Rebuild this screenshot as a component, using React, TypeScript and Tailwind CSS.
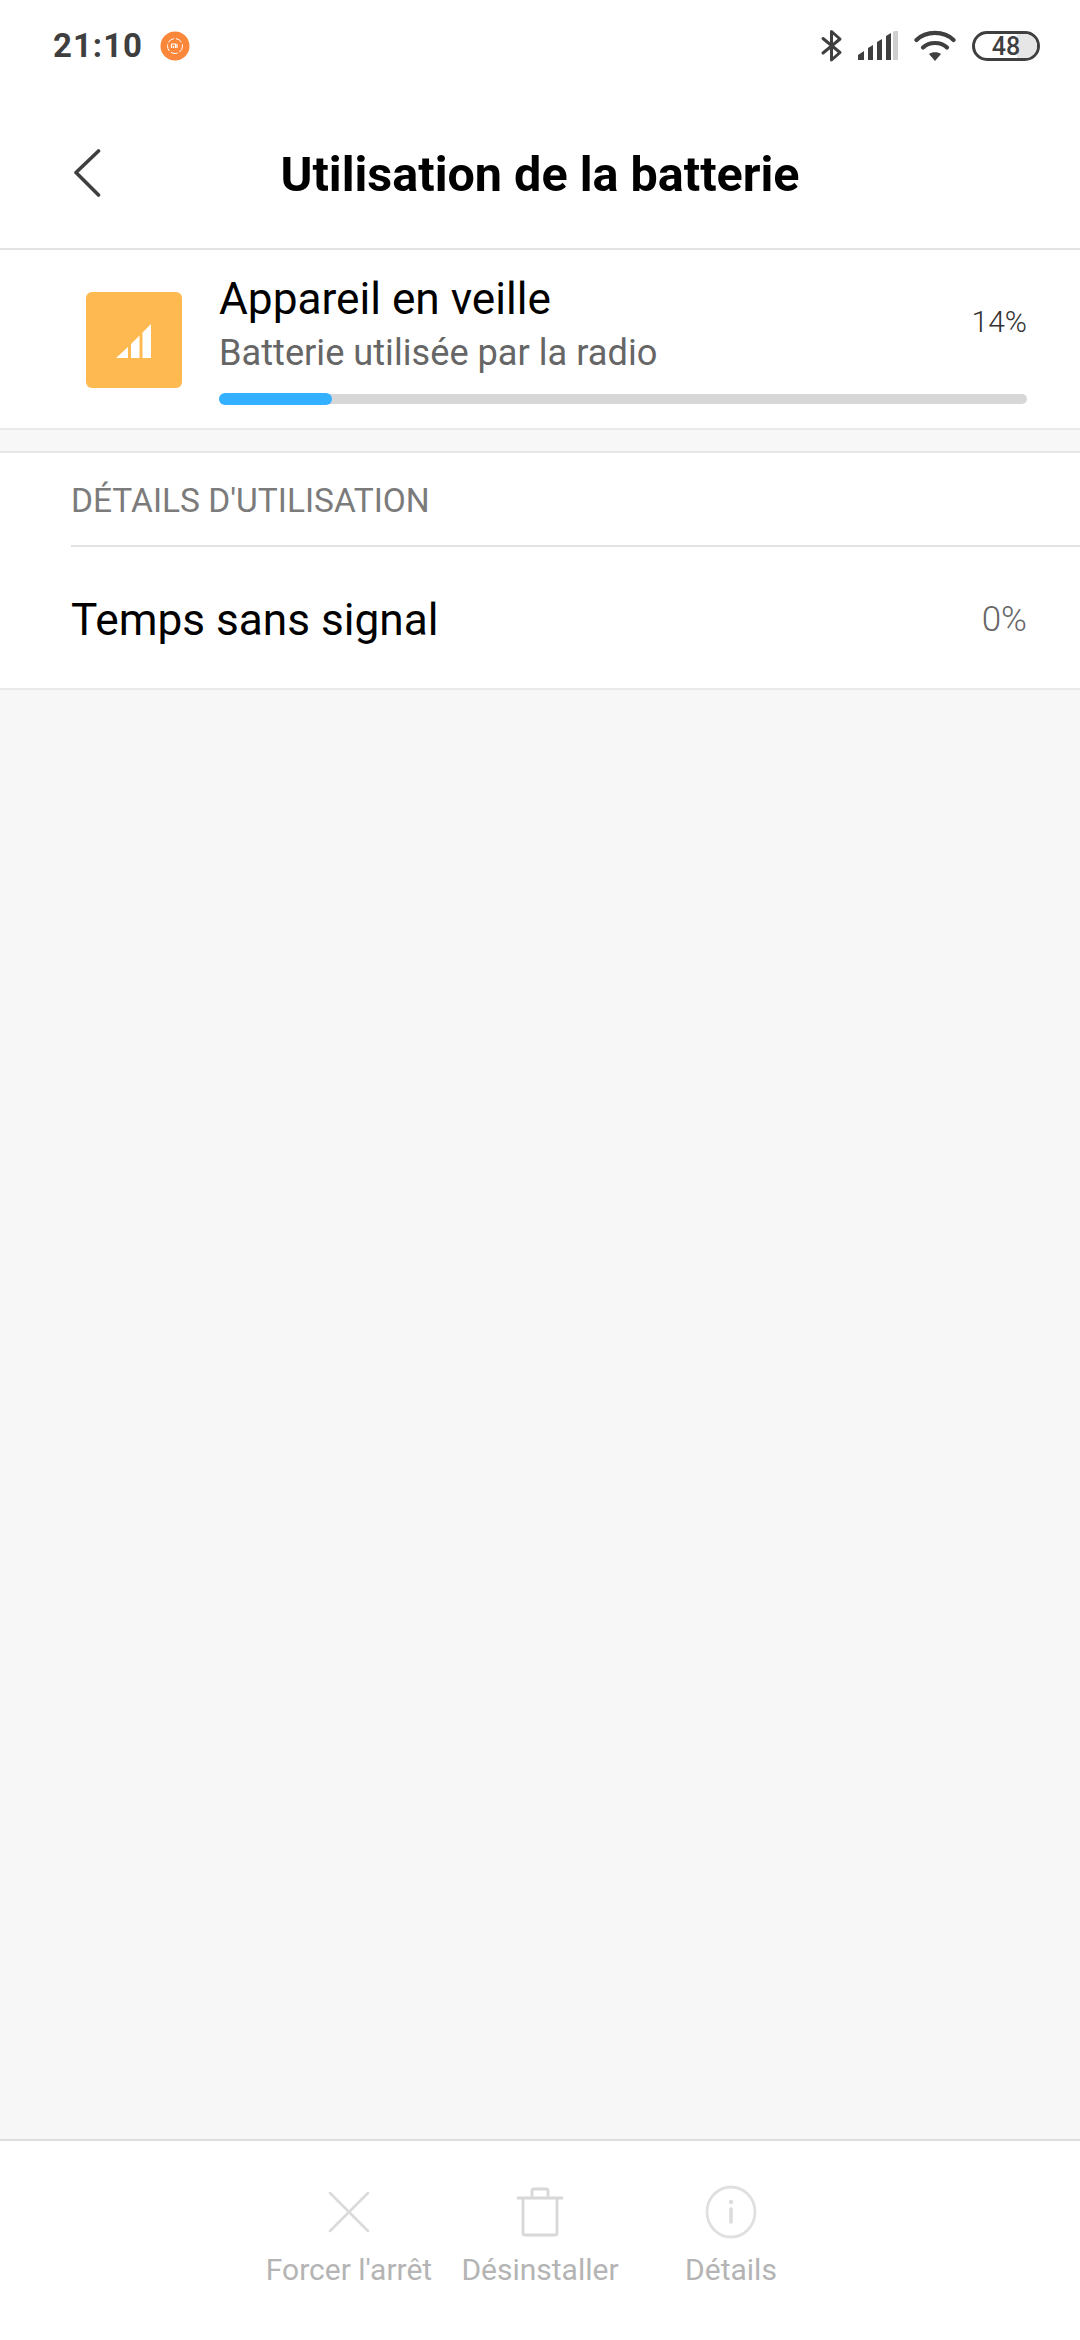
import React from 'react';

const roboto = { fontFamily: 'Roboto, sans-serif' };

const StatusBar = () => (
  <div className="h-[90px] flex items-start justify-between pl-[53px] pr-[40px] pt-[28px]">
    <div className="flex items-center gap-[17px]">
      <span className="text-[33px] leading-[36px] font-bold text-[#3f3f3f] tracking-[1px]">21:10</span>
      <svg width="30" height="30" viewBox="0 0 30 30">
        <circle cx="15" cy="15" r="14.5" fill="#fb873a" />
        <circle cx="15" cy="15" r="7.5" fill="none" stroke="#fff" strokeWidth="1" strokeDasharray="7 2" />
        <path d="M11.5 13h4v4M13.5 15v2M11.5 13v4M17 13v4" fill="none" stroke="#fff" strokeWidth="1.2" />
      </svg>
    </div>
    <div className="flex items-center h-[36px]">
      <svg width="24" height="36" viewBox="0 0 24 36" className="mr-[14px]">
        <path d="M3 10.5 L20 24.5 L11.5 32 V3.5 L20 11 L3 25" fill="none" stroke="#3f3f3f" strokeWidth="3" strokeLinejoin="round" strokeLinecap="round" />
      </svg>
      <svg width="40" height="30" viewBox="0 0 40 30" className="mr-[16px]">
        <path d="M0 29 V24 L6 20 V29Z M10 29 V17 L15 14 V29Z M19 29 V11 L24 8 V29Z M28 29 V5 L33 2 V29Z" fill="#3f3f3f" />
        <path d="M35 29 V1 L40 -2 V29Z" fill="#cfcfcf" />
      </svg>
      <svg width="42" height="32" viewBox="0 0 42 32" className="mr-[16px]">
        <path d="M2.5 10 C12 0.5 30 0.5 39.5 10" fill="none" stroke="#3f3f3f" strokeWidth="4.2" strokeLinecap="round" />
        <path d="M9 17.5 C15 11.5 27 11.5 33 17.5" fill="none" stroke="#3f3f3f" strokeWidth="4.2" strokeLinecap="round" />
        <path d="M15 24 C18 21.5 24 21.5 27 24 L21 31Z" fill="#3f3f3f" />
      </svg>
      <div className="relative w-[68px] h-[30px] rounded-full border-[3px] border-[#3f3f3f] overflow-hidden">
        <div className="absolute right-0 top-0 bottom-0 w-[20px] bg-[#e6e6e6]" />
        <span className="absolute inset-0 flex items-center justify-center text-[25px] leading-none font-medium text-[#3f3f3f]">48</span>
      </div>
    </div>
  </div>
);

const Header = () => (
  <div className="relative h-[160px] flex items-center justify-center border-b-2 border-[#e3e3e3] pt-[11px]">
    <svg width="30" height="52" viewBox="0 0 30 52" className="absolute left-[74px] top-[58px]">
      <path d="M24.5 3 L2 24.5 L24.5 47" fill="none" stroke="#3f3f3f" strokeWidth="3.6" strokeLinecap="round" strokeLinejoin="round" />
    </svg>
    <h1 className="text-[48.5px] leading-[60px] font-bold text-black">Utilisation de la batterie</h1>
  </div>
);

const UsageCard = () => (
  <div className="h-[180px] bg-white border-b-2 border-[#e9e9e9] flex pl-[86px] pr-[53px]">
    <div className="mt-[42px] w-[96px] h-[96px] rounded-[6px] bg-[#ffb951] flex items-center justify-center shrink-0">
      <svg width="36" height="36" viewBox="0 0 36 36" className="mt-[2px]">
        <path d="M0 35 L12 24 V35Z M15 35 V21 L23.5 12.5 V35Z M26.5 35 V9.5 L35 1 V35Z" fill="#fff" />
      </svg>
    </div>
    <div className="flex-1 ml-[37px] min-w-0">
      <div className="flex justify-between">
        <div>
          <p className="text-[44.2px] leading-[50px] text-black mt-[24px]">Appareil en veille</p>
          <p className="text-[36.2px] leading-[46px] text-[#666666] mt-[6px]">Batterie utilisée par la radio</p>
        </div>
        <span className="text-[30px] leading-[40px] font-light text-[#333333] mt-[52px]">14%</span>
      </div>
      <div className="mt-[18px] h-[10px] rounded-full bg-[#d7d7d7]">
        <div className="h-[12px] -translate-y-[1px] w-[113px] rounded-full bg-[#33b0ff]" />
      </div>
    </div>
  </div>
);

const Details = () => (
  <div className="mt-[21px] bg-white border-t-2 border-[#e6e6e6]">
    <div className="h-[94px] ml-[71px] border-b-2 border-[#e3e3e3] flex items-center pt-[4px]">
      <span className="text-[33.5px] text-[#7b7b7b]">DÉTAILS D'UTILISATION</span>
    </div>
    <div className="h-[143px] pl-[71px] pr-[53px] flex items-center justify-between border-b-2 border-[#e9e9e9] pt-[6px]">
      <span className="text-[44.2px] text-black">Temps sans signal</span>
      <span className="text-[35px] font-light text-[#666666]">0%</span>
    </div>
  </div>
);

const FooterButton = ({ label, icon }: { label: string; icon: React.ReactNode }) => (
  <div className="flex flex-col items-center">
    <div className="h-[56px] flex items-center justify-center">{icon}</div>
    <span className="text-[30px] leading-[40px] text-[#b4b4b4] mt-[10px] whitespace-nowrap">{label}</span>
  </div>
);

const Footer = () => (
  <div className="h-[201px] bg-white border-t-2 border-[#dedede] pt-[43px]">
    <div className="w-[573px] mx-auto grid grid-cols-3">
      <FooterButton
        label="Forcer l'arrêt"
        icon={
          <svg width="42" height="42" viewBox="0 0 42 42">
            <path d="M2 2 L40 40 M40 2 L2 40" stroke="#dadada" strokeWidth="2.6" strokeLinecap="round" />
          </svg>
        }
      />
      <FooterButton
        label="Désinstaller"
        icon={
          <svg width="48" height="50" viewBox="0 0 48 50">
            <path d="M2 11 H46 M7 11 V46 Q7 48 9 48 H39 Q41 48 41 46 V11 M16 11 V4 Q16 2 18 2 H30 Q32 2 32 4 V11" fill="none" stroke="#d8d8d8" strokeWidth="2.8" strokeLinecap="round" />
          </svg>
        }
      />
      <FooterButton
        label="Détails"
        icon={
          <svg width="52" height="54" viewBox="0 0 52 54">
            <ellipse cx="26" cy="27" rx="24" ry="25" fill="none" stroke="#e0e0e0" strokeWidth="2.8" />
            <circle cx="26" cy="17" r="2.2" fill="#dcdcdc" />
            <path d="M26 24 V37" stroke="#dcdcdc" strokeWidth="3.6" strokeLinecap="round" />
          </svg>
        }
      />
    </div>
  </div>
);

export default function App() {
  return (
    <div className="w-[1080px] h-[2340px] bg-[#f7f7f7] flex flex-col overflow-hidden" style={roboto}>
      <div className="bg-white">
        <StatusBar />
        <Header />
      </div>
      <UsageCard />
      <Details />
      <div className="flex-1" />
      <Footer />
    </div>
  );
}
